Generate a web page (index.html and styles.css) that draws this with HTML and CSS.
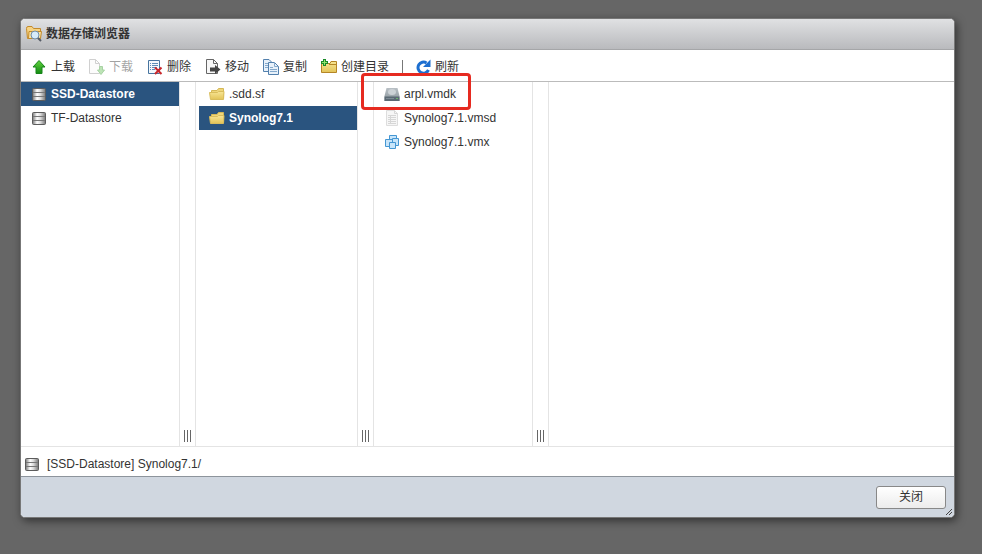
FILE: index.html
```html
<!DOCTYPE html>
<html lang="zh-CN">
<head>
<meta charset="utf-8">
<title>数据存储浏览器</title>
<link rel="stylesheet" href="styles.css">
</head>
<body>
<svg class="defs" aria-hidden="true">
  <defs>
    <linearGradient id="steel"><stop offset="0" stop-color="#777"/><stop offset=".35" stop-color="#fff"/><stop offset=".6" stop-color="#ddd"/><stop offset="1" stop-color="#777"/></linearGradient>
    <linearGradient id="gold" x2="0" y2="1"><stop offset="0" stop-color="#f8e695"/><stop offset="1" stop-color="#e2c358"/></linearGradient>
    <linearGradient id="green" x2="0" y2="1"><stop offset="0" stop-color="#63d43f"/><stop offset="1" stop-color="#128a12"/></linearGradient>
    <linearGradient id="disk" x2="0" y2="1"><stop offset="0" stop-color="#b9c0c5"/><stop offset="1" stop-color="#8b969c"/></linearGradient>
    <symbol id="store" viewBox="0 0 16 16">
      <rect x="1.500" y="2.500" width="13" height="12" rx="1" fill="url(#steel)" stroke="#5c5c5c"/>
      <path d="M2 6.500H14M2 10.500H14" stroke="#777"/>
    </symbol>
    <symbol id="folder" viewBox="0 0 16 16">
      <path d="M2.500 12V4.500H8L9.500 2.500H14.500V12Z" fill="#efd67a" stroke="#d5b856"/>
      <path d="M.5 6.500H8.500L9.500 5.500H15L14.500 13.500H1.500Z" fill="url(#gold)" stroke="#d9bd5c"/>
    </symbol>
  </defs>
</svg>
<main class="dialog">
  <header class="title">
    <svg class="icon" viewBox="0 0 16 16"><path d="M1.500 12.500L.5 2.500Q.5 .5 2 .5H6L7.500 2.500H14.500V12.500Z" fill="#f6d383" stroke="#c38a2b"/><path d="M3 5.500H15.500L14.500 12.500H2.500Z" fill="#fbe3a4" stroke="#c38a2b"/><circle cx="9" cy="9" r="4" fill="#d6ebfa" stroke="#6f8ca7"/><path d="M12 12L15 15" stroke="#555b66" stroke-width="2"/></svg>
    <h1>数据存储浏览器</h1>
  </header>
  <nav class="toolbar">
    <button><svg class="icon" viewBox="0 0 16 16"><path d="M8 1.500L14 8H11V14.500H5V8H2Z" fill="url(#green)" stroke="#16851a"/></svg>上载</button>
    <button disabled><svg class="icon" viewBox="0 0 16 16"><path d="M.5 .5H6.500L10.500 4.500V14.500H.5Z" fill="#fafafa" stroke="#999"/><path d="M6.500 .5V4.500H10.500" fill="none" stroke="#999"/><path d="M10.500 7.500H13.500V11H15.500L12 15.500L8.500 11H10.500Z" fill="#6fc45e" stroke="#3f9d36"/></svg>下载</button>
    <button><svg class="icon" viewBox="0 0 16 16"><path d="M1.500 1.500H12.500V14.500H1.500Z" fill="#f3f8fc" stroke="#47749f"/><path d="M3 4.500H4M5 4.500H11M3 6.500H4M5 6.500H11M3 8.500H4M5 8.500H10M3 10.500H4M5 10.500H8" stroke="#5c8cb8"/><path d="M8 8.500L14.500 15M14.500 8.500L8 15" stroke="#c9272b" stroke-width="2"/></svg>删除</button>
    <button><svg class="icon" viewBox="0 0 16 16"><path d="M1.500 .5H8.500L12.500 4.500V14.500H1.500Z" fill="#f7f7f7" stroke="#666"/><path d="M8.500 .5V4.500H12.500" fill="none" stroke="#666"/><path d="M5 8.500H10V6L15.500 10.500L10 15V12.500H5Z" fill="#444"/></svg>移动</button>
    <button><svg class="icon" viewBox="0 0 16 16"><path d="M.5 .5H6L9.500 4V12.500H.5Z" fill="#e8f1fa" stroke="#5380ad"/><path d="M2 4.500H5M2 6.500H5M2 8.500H5" stroke="#84a9cc"/><path d="M5.500 3.500H11.500L15.500 7.500V15.500H5.500Z" fill="#e8f1fa" stroke="#5380ad"/><path d="M11.500 3.500V7.500H15M7 8.500H10M7 10.500H14M7 12.500H14" fill="none" stroke="#84a9cc"/></svg>复制</button>
    <button><svg class="icon" viewBox="0 0 16 16"><path d="M.5 13.500V4.500H9L10 2.500H15.500V13.500Z" fill="url(#gold)" stroke="#b58626"/><path d="M8 5.500H15" stroke="#b58626"/><path d="M3.500 0V7M0 3.500H7" stroke="#198a28" stroke-width="3"/><path d="M3.500 1V6M1 3.500H6" stroke="#91e36d"/></svg>创建目录</button>
    <span class="divider"></span>
    <button><svg class="icon" viewBox="0 0 16 16"><path d="M13.500 11A5.500 5.500 0 1 1 11.500 4" fill="none" stroke="#1d6fd0" stroke-width="3"/><path d="M8 8H15.500V.5Z" fill="#1d6fd0"/></svg>刷新</button>
  </nav>
  <section class="browser">
    <ul class="column">
      <li class="selected"><svg class="icon"><use href="#store"/></svg>SSD-Datastore</li>
      <li><svg class="icon"><use href="#store"/></svg>TF-Datastore</li>
    </ul>
    <div class="splitter"><i></i></div>
    <ul class="column inset">
      <li><svg class="icon"><use href="#folder"/></svg>.sdd.sf</li>
      <li class="selected"><svg class="icon"><use href="#folder"/></svg>Synolog7.1</li>
    </ul>
    <div class="splitter"><i></i></div>
    <ul class="column">
      <li class="marked"><svg class="icon" viewBox="0 0 16 16"><path d="M2.500 2H13.500L15.500 10V15H.5V10Z" fill="url(#disk)"/><ellipse cx="8" cy="6" rx="4" ry="3" fill="#ccd2d6"/><path d="M.5 10.500H15.500V15H.5Z" fill="#5b6a74"/><path d="M2 12.500H10" stroke="#7d8b94"/><path d="M12 12.500H14" stroke="#68b56a"/></svg>arpl.vmdk</li>
      <li><svg class="icon" viewBox="0 0 16 16"><path d="M2.500 .5H10.500L13.500 3.500V15.500H2.500Z" fill="#f6f6f6" stroke="#ddd"/><path d="M10.500 .5V3.500H13.500M4 5.500H12M4 7.500H12M4 9.500H12M4 11.500H12M4 13.500H12M6.500 5V14" fill="none" stroke="#d6d6d6"/></svg>Synolog7.1.vmsd</li>
      <li><svg class="icon" viewBox="0 0 16 16"><g fill="#c8e5fa" stroke="#4597d3"><path d="M5.500 1.500H12.500V7.500H5.500Z"/><path d="M1.500 5.500H8.500V12.500H1.500Z"/><path d="M8.500 4.500H14.500V11.500H8.500Z"/><path d="M5.500 8.500H11.500V14.500H5.500Z"/></g></svg>Synolog7.1.vmx</li>
    </ul>
    <div class="splitter"><i></i></div>
  </section>
  <div class="path"><svg class="icon"><use href="#store"/></svg>[SSD-Datastore] Synolog7.1/</div>
  <footer class="actions">
    <button class="close">关闭</button>
    <svg class="grip" viewBox="0 0 6 6" aria-hidden="true"><path d="M0 6L6 0M3 6L6 3" stroke="#444"/></svg>
  </footer>
</main>
</body>
</html>
```
FILE: styles.css
```css
* { box-sizing: border-box; }
body {
  margin: 0;
  min-height: 100vh;
  padding: 18px 27px 36px 20px;
  display: flex;
  background: #666;
  color: #333;
  font: 12px/24px "Liberation Sans", "Noto Sans CJK SC", sans-serif;
}
.defs { position: absolute; width: 0; height: 0; }
.icon { width: 16px; height: 16px; flex: none; }
button { font: inherit; color: inherit; }
.dialog {
  position: relative;
  flex: 1;
  display: flex;
  flex-direction: column;
  border: 1px solid #777;
  border-radius: 5px;
  background: #fff;
  box-shadow: 2px 3px 8px rgba(0, 0, 0, .5);
}
.title {
  display: flex;
  align-items: center;
  gap: 4px;
  height: 31px;
  padding: 0 5px;
  border-bottom: 1px solid #a5a6a8;
  border-radius: 4px 4px 0 0;
  background: linear-gradient(#e0e1e3, #b9babd);
}
.title h1 { margin: 0; font-size: 12px; font-weight: bold; }
.toolbar {
  display: flex;
  align-items: center;
  gap: 14px;
  height: 32px;
  padding: 2px 10px 0;
  border-bottom: 1px solid #bbb;
}
.toolbar button {
  display: flex;
  align-items: center;
  gap: 4px;
  padding: 0;
  border: 0;
  background: none;
  white-space: nowrap;
}
.toolbar button:disabled { opacity: .45; }
.divider { width: 1px; height: 14px; background: #777; margin: 0 -2px 0 -1px; }
.browser { flex: 1; display: flex; border-bottom: 1px solid #e4e4e4; }
.column { width: 158px; margin: 0; padding: 0; list-style: none; }
.inset { width: 161px; padding-left: 3px; }
.column li {
  position: relative;
  display: flex;
  align-items: center;
  gap: 4px;
  height: 24px;
  padding-left: 10px;
}
.column .selected { background: #2a547f; color: #fff; font-weight: bold; }
.marked::after {
  content: "";
  position: absolute;
  inset: -9px 61px -4px -13px;
  border: 3px solid #e62a20;
  border-radius: 4px;
}
.splitter {
  display: flex;
  align-items: flex-end;
  justify-content: center;
  width: 17px;
  padding-bottom: 4px;
  border: solid #e4e4e4;
  border-width: 0 1px;
}
.splitter i { width: 7px; height: 12px; background: repeating-linear-gradient(90deg, #666 0 1px, transparent 1px 3px); }
.path {
  display: flex;
  align-items: center;
  gap: 7px;
  height: 29px;
  padding: 4px 3px 0;
}
.actions {
  position: relative;
  display: flex;
  align-items: center;
  justify-content: flex-end;
  height: 41px;
  padding: 0 8px;
  border-top: 1px solid #8d949c;
  border-radius: 0 0 4px 4px;
  background: #d0d7e0;
}
.close {
  width: 70px;
  height: 23px;
  padding: 0;
  border: 1px solid #888;
  border-radius: 3px;
  background: linear-gradient(#fff, #ececec);
  line-height: 20px;
}
.grip { position: absolute; right: 2px; bottom: 2px; width: 6px; height: 6px; }
```
